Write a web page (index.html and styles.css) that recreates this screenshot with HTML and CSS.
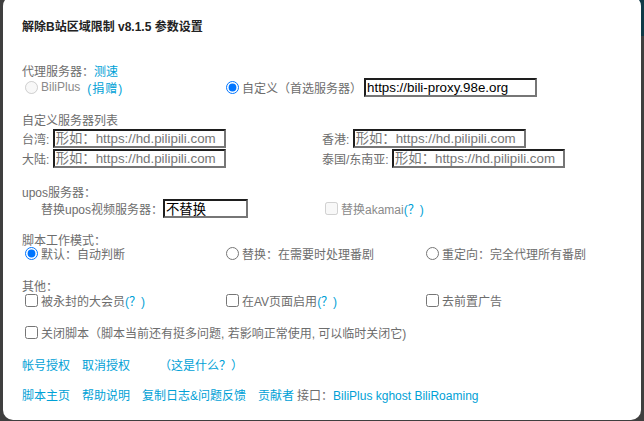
FILE: index.html
```html
<!DOCTYPE html>
<html lang="zh-CN">
<head>
<meta charset="utf-8">
<title>解除B站区域限制 参数设置</title>
<link rel="stylesheet" href="styles.css">
</head>
<body>
<div class="dialog">
  <div class="title">解除B站区域限制 v8.1.5 参数设置</div>

  <div class="label sec-proxy">代理服务器：<a class="link">测速</a></div>
  <div class="row2 proxy">
    <label class="cell disabled"><input type="radio" name="proxy" disabled><span>BiliPlus</span><a class="link donate">(捐赠)</a></label>
    <label class="cell wide"><input type="radio" name="proxy" checked><span>自定义（首选服务器）</span><input class="text url" type="text" value="https://bili-proxy.98e.org"></label>
  </div>

  <div class="label sec-list">自定义服务器列表</div>
  <div class="row2 srv">
    <label class="cell">台湾:&nbsp;<input class="text" type="text" placeholder="形如：https://hd.pilipili.com"></label>
    <label class="cell">香港:&nbsp;<input class="text" type="text" placeholder="形如：https://hd.pilipili.com"></label>
  </div>
  <div class="row2 srv">
    <label class="cell">大陆:&nbsp;<input class="text" type="text" placeholder="形如：https://hd.pilipili.com"></label>
    <label class="cell">泰国/东南亚:&nbsp;<input class="text" type="text" placeholder="形如：https://hd.pilipili.com"></label>
  </div>

  <div class="label sec-upos">upos服务器：</div>
  <div class="row2 upos">
    <label class="cell indent">替换upos视频服务器：<input class="text small" type="text" value="不替换"></label>
    <label class="cell disabled"><input type="checkbox" disabled><span>替换akamai</span><a class="link">(？)</a></label>
  </div>

  <div class="label sec-mode">脚本工作模式：</div>
  <div class="row3">
    <label class="cell"><input type="radio" name="mode" checked><span>默认：自动判断</span></label>
    <label class="cell"><input type="radio" name="mode"><span>替换：在需要时处理番剧</span></label>
    <label class="cell"><input type="radio" name="mode"><span>重定向：完全代理所有番剧</span></label>
  </div>

  <div class="label sec-other">其他：</div>
  <div class="row3">
    <label class="cell"><input type="checkbox"><span>被永封的大会员</span><a class="link">(？)</a></label>
    <label class="cell"><input type="checkbox"><span>在AV页面启用</span><a class="link">(？)</a></label>
    <label class="cell"><input type="checkbox"><span>去前置广告</span></label>
  </div>
  <div class="row1 close">
    <label class="cell"><input type="checkbox"><span>关闭脚本（脚本当前还有挺多问题, 若影响正常使用, 可以临时关闭它)</span></label>
  </div>

  <div class="links auth">
    <a class="link">帐号授权</a><a class="link">取消授权</a><a class="link what">（这是什么？）</a>
  </div>
  <div class="links foot">
    <a class="link">脚本主页</a><a class="link">帮助说明</a><a class="link">复制日志&amp;问题反馈</a><a class="link tight">贡献者</a><span class="plain">接口：</span><a class="link">BiliPlus kghost BiliRoaming</a>
  </div>
</div>
</body>
</html>
```

FILE: styles.css
```css
html, body {
  margin: 0;
  padding: 0;
}
body {
  width: 644px;
  height: 421px;
  overflow: hidden;
  background:
    linear-gradient(#0f3a47, #0f3a47) right top / 6px 36px no-repeat,
    #3f3f3f;
  font-family: "Liberation Sans", "Noto Sans CJK SC", sans-serif;
  font-size: 12px;
  color: #6d6d6d;
}
.dialog {
  box-sizing: border-box;
  width: 638px;
  height: 424px;
  margin: -4px 0 0 3px;
  background: #fff;
  border-radius: 10px;
  padding: 21px 0 0 19px;
}
.title {
  height: 20px;
  line-height: 20px;
  font-weight: bold;
  color: #222;
}
.label {
  height: 14px;
  line-height: 16px;
  white-space: nowrap;
}
.link {
  color: #00a1d6;
  cursor: pointer;
  text-decoration: none;
}
.sec-proxy { margin-top: 27px; }
.sec-list { margin-top: 17px; }
.sec-upos { margin-top: 18px; }
.sec-mode { margin-top: 15px; line-height: 18px; }
.sec-other { margin-top: 19px; }

.row1, .row2, .row3 {
  display: flex;
  white-space: nowrap;
}
.cell {
  box-sizing: border-box;
  display: flex;
  align-items: center;
  flex: none;
}
.row2 .cell { width: 300px; }
.row2.proxy .cell { width: 201px; }
.row2.proxy .cell.wide { width: auto; }
.row3 .cell { width: 200px; }
.row3 .cell:first-child { width: 201px; }
.row2 { height: 18px; }
.row2.srv { margin-top: 2px; }
.row2.upos { margin-top: 0; }
.row3, .row1 { height: 14px; }
.row1.close { margin-top: 18px; }

.cell.disabled span { color: #8a8a8a; }
.indent { padding-left: 19px; }
.donate { margin-left: 7px; letter-spacing: 1px; }

input[type="radio"], input[type="checkbox"] {
  width: 13px;
  height: 13px;
  margin: 0 3px 0 3px;
  flex: none;
}
input[type="radio"] { margin-top: 1px; }

.text {
  box-sizing: border-box;
  width: 173px;
  height: 19px;
  margin: 0;
  padding: 0 1px;
  border-width: 2px;
  border-style: solid;
  border-color: #1e1e1e #767676 #767676 #1e1e1e;
  font-family: "Liberation Sans", "Noto Sans CJK SC", sans-serif;
  font-size: 13.33px;
  color: #000;
  background: #fff;
}
.text::placeholder { color: #757575; }
.text.url { margin-left: 2px; }
.text.small { width: 85px; }

.links {
  height: 14px;
  line-height: 16px;
  white-space: nowrap;
  display: flex;
}
.links .link { margin-right: 12px; }
.links .link.what { margin-left: 17px; }
.links .link.tight { margin-right: 3px; }
.auth { margin-top: 19px; }
.foot { margin-top: 16px; }
```
